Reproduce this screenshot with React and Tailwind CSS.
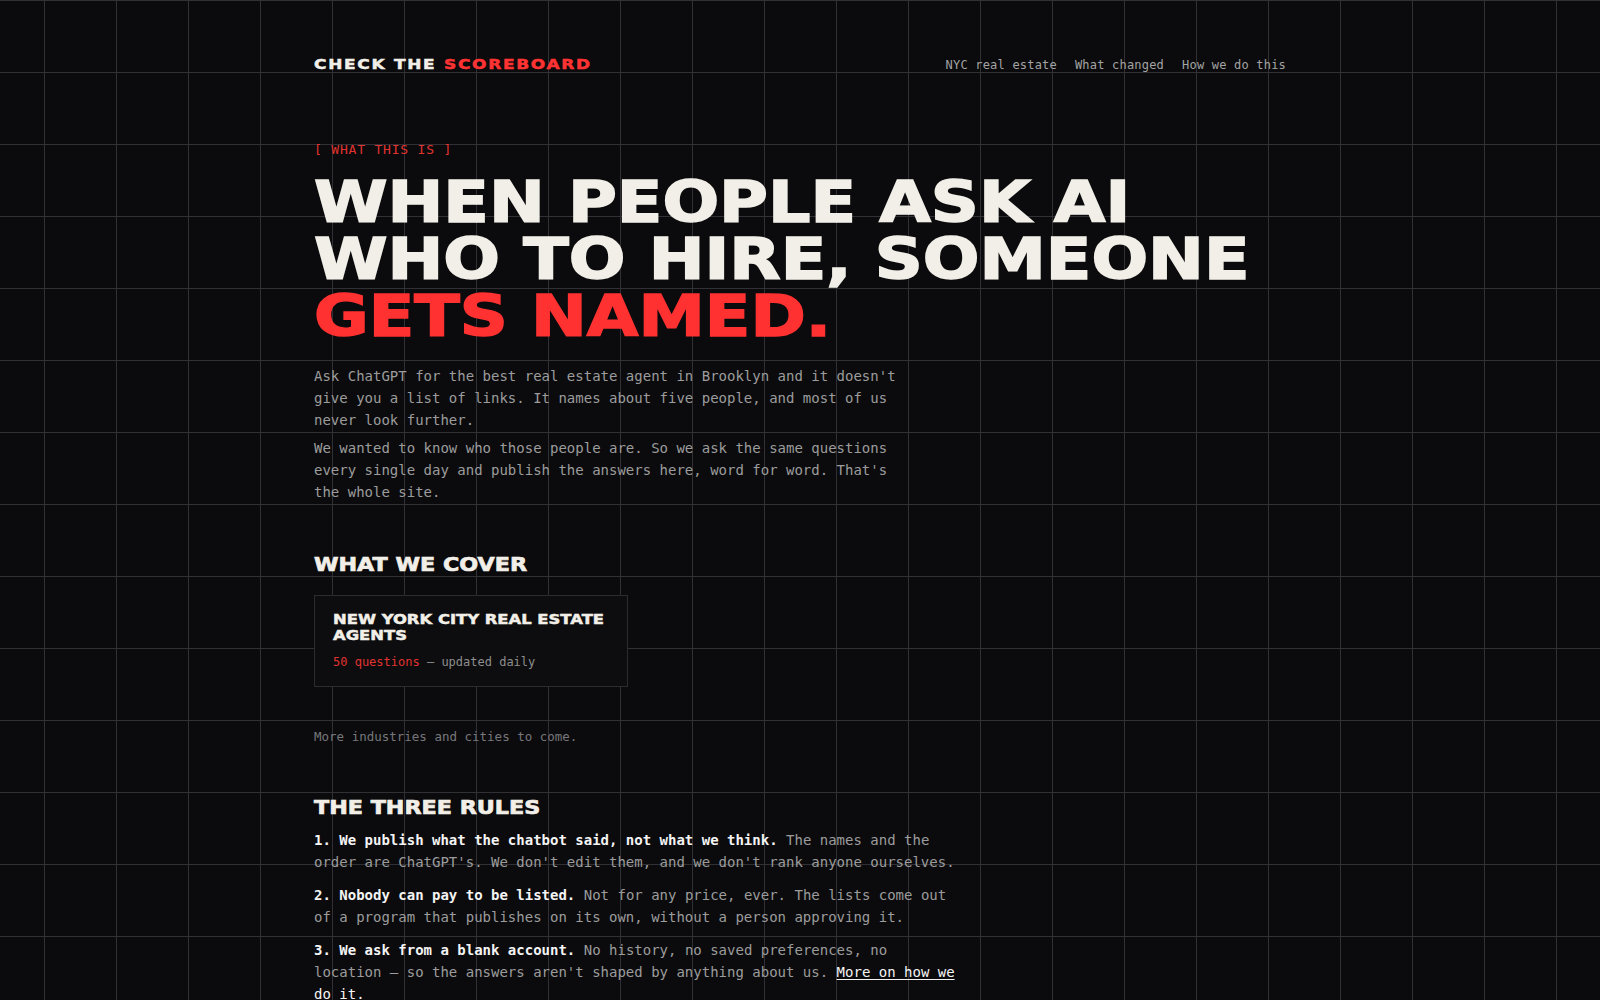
const display = "font-['DejaVu_Sans',sans-serif] font-bold";

export default function App() {
  return (
    <div className="min-h-screen bg-[#0b0b0d] bg-[image:linear-gradient(to_right,#313135_1px,transparent_1px),linear-gradient(to_bottom,#313135_1px,transparent_1px)] bg-size-[72px_72px] bg-position-[44px_0px] font-['DejaVu_Sans_Mono',monospace] text-[#9c9c9c]">
      <div className="mx-auto w-[972px] pt-[54px] pb-10">
        <header className="flex items-baseline justify-between">
          <div className={display + " inline-block origin-left scale-x-[1.17] text-[14.5px] leading-[20px] tracking-[0.1em] text-[#f2efe8] [-webkit-text-stroke:0.5px_currentColor]"}>
            CHECK THE <span className="text-[#ff3333]">SCOREBOARD</span>
          </div>
          <nav className="flex gap-[18px] text-[12px] leading-[18px] tracking-[0.2px] text-[#a3a3a3]">
            <a href="#">NYC real estate</a>
            <a href="#">What changed</a>
            <a href="#">How we do this</a>
          </nav>
        </header>

        <div className="mt-[66px] text-[13px] leading-[19.5px] tracking-[0.8px] text-[#e0332f] whitespace-pre">
          [ WHAT THIS IS ]
        </div>

        <h1 className={display + " mt-[14px] origin-left scale-x-[1.17] text-[57px] leading-[57px] text-[#f2efe8] [-webkit-text-stroke:1.6px_currentColor]"}>
          <span className="block">WHEN PEOPLE ASK AI</span>
          <span className="block">WHO TO HIRE, SOMEONE</span>
          <span className="block text-[#ff3131]">GETS NAMED.</span>
        </h1>

        <p className="mt-[20px] max-w-[600px] text-[14px] leading-[22px]">
          Ask ChatGPT for the best real estate agent in Brooklyn and it doesn't give you a list of links. It names about five people, and most of us never look further.
        </p>
        <p className="mt-[6px] max-w-[600px] text-[14px] leading-[22px]">
          We wanted to know who those people are. So we ask the same questions every single day and publish the answers here, word for word. That's the whole site.
        </p>

        <h2 className={display + " mt-[50px] origin-left scale-x-[1.17] text-[19px] leading-[23px] text-[#f2efe8] [-webkit-text-stroke:0.7px_currentColor]"}>
          WHAT WE COVER
        </h2>

        <div className="mt-[19px] w-[314px] border border-[#2c2c30] bg-[#0d0d0f] px-[18px] py-[15px]">
          <div className={display + " origin-left scale-x-[1.17] text-[14px] leading-[16.5px] text-[#f2efe8] [-webkit-text-stroke:0.5px_currentColor]"}>
            NEW YORK CITY REAL ESTATE
            <br />
            AGENTS
          </div>
          <div className="mt-[9px] text-[12px] leading-[18px] text-[#8e8e8e]">
            <span className="text-[#e0332f]">50 questions</span> — updated daily
          </div>
        </div>

        <p className="mt-[41px] text-[12.5px] leading-[18px] text-[#77777b]">
          More industries and cities to come.
        </p>

        <h2 className={display + " mt-[50px] origin-left scale-x-[1.17] text-[19px] leading-[23px] text-[#f2efe8] [-webkit-text-stroke:0.7px_currentColor]"}>
          THE THREE RULES
        </h2>

        <div className="mt-[10px] max-w-[644px] text-[14px] leading-[22px]">
          <p className="mb-[11px]">
            <strong className="font-bold text-[#f4f4f4]">1. We publish what the chatbot said, not what we think.</strong>{" "}
            The names and the order are ChatGPT's. We don't edit them, and we don't rank anyone ourselves.
          </p>
          <p className="mb-[11px]">
            <strong className="font-bold text-[#f4f4f4]">2. Nobody can pay to be listed.</strong>{" "}
            Not for any price, ever. The lists come out of a program that publishes on its own, without a person approving it.
          </p>
          <p className="mb-[11px]">
            <strong className="font-bold text-[#f4f4f4]">3. We ask from a blank account.</strong>{" "}
            No history, no saved preferences, no location — so the answers aren't shaped by anything about us.{" "}
            <a href="#" className="text-[#f4f4f4] underline underline-offset-2">More on how we do it.</a>
          </p>
        </div>
      </div>
    </div>
  );
}
